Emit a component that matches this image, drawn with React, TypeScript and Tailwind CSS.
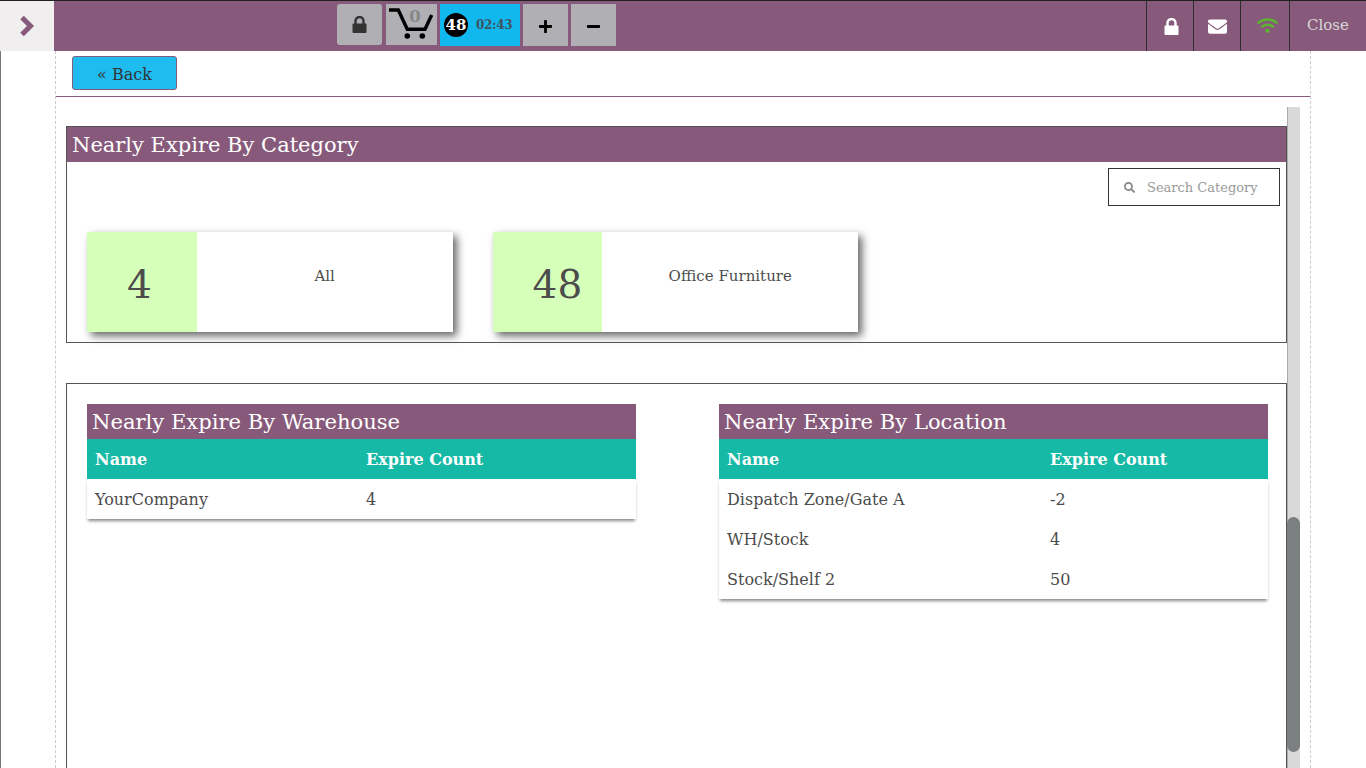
import { FaEnvelope, FaMinus, FaPlus, FaSearch, FaWifi } from "react-icons/fa";

const serif = "font-['DejaVu_Serif','Liberation_Serif',serif]";

function CategoryCard({ count, label }: { count: string; label: string }) {
  return (
    <div className="flex h-[100px] w-[365.6px] bg-white shadow-[4px_4px_8px_#666]">
      <div className="flex h-full w-[109.7px] items-center bg-[#d6ffb9] pl-[40px] pt-[6px] text-[39px] text-[#4c4c4c]">{count}</div>
      <div className="flex-1 pt-[33px] text-center text-[15px] text-[#4c4c4c]">{label}</div>
    </div>
  );
}

function ExpireTable({ title, rows, nameWidth, className }: { title: string; rows: [string, string][]; nameWidth: string; className: string }) {
  return (
    <div className={`w-[549px] ${className}`}>
      <div className="flex h-[35px] items-center bg-[#875a7b] pl-[5px] text-[21.1px] text-white">{title}</div>
      <div className="flex h-[40px] items-center bg-[#16b9a5] pl-[8px] pt-[1px] text-[16px] font-bold text-white">
        <div className={nameWidth}>Name</div>
        <div>Expire Count</div>
      </div>
      <div className="shadow-[0_3px_3px_-1px_#888]">
        {rows.map(([name, count]) => (
          <div key={name} className="flex h-[40px] items-center bg-white pl-[8px] pt-[1px] text-[16px] text-[#4c4c4c]">
            <div className={nameWidth}>{name}</div>
            <div>{count}</div>
          </div>
        ))}
      </div>
    </div>
  );
}

function LockIcon({ color }: { color: string }) {
  return (
    <svg width="15" height="17" viewBox="0 0 15 17" fill="none">
      <rect x="0.5" y="7.5" width="14" height="9.5" rx="1" fill={color} />
      <path d="M3.5 8V5a4 4 0 0 1 8 0v3" stroke={color} strokeWidth="2.4" />
    </svg>
  );
}

function CartIcon() {
  return (
    <svg width="51" height="41" viewBox="0 0 51 41" fill="none">
      <path d="M3 6H12.3L21.3 25.3H39L45.7 11" stroke="#000" strokeWidth="3.4" strokeLinejoin="miter" />
      <circle cx="21.3" cy="32" r="2.8" fill="#000" />
      <circle cx="36.3" cy="32" r="2.8" fill="#000" />
    </svg>
  );
}

export default function App() {
  return (
    <div className={`flex h-screen w-full flex-col overflow-hidden bg-white ${serif}`}>
      <header className="flex h-[51px] shrink-0 border-t border-t-[#222] bg-[#875a7b]">
        <div className="flex w-[54px] items-center justify-center bg-[#f0eeee]">
          <svg width="16" height="22" viewBox="0 0 16 22" fill="none">
            <path d="M3 2.5L11.5 11L3 19.5" stroke="#875a7b" strokeWidth="5" />
          </svg>
        </div>
        <div className="ml-[283px] flex items-start gap-[3px] pt-[3px]">
          <div className="mr-[1px] flex h-[41px] w-[45px] items-center justify-center rounded-[3px] bg-[#b0b0b4]">
            <LockIcon color="#333" />
          </div>
          <div className="relative h-[41px] w-[51px] bg-[#b0b0b4]">
            <CartIcon />
            <span className="absolute left-[23px] top-[0px] text-[17px] font-bold text-[#888]">0</span>
          </div>
          <div className="flex h-[42px] w-[80px] items-center bg-[#10b8ef] pl-[4px]">
            <span className="flex h-[24px] w-[24px] items-center justify-center rounded-full bg-black text-[15px] font-bold text-white">48</span>
            <span className="ml-[8px] text-[12px] font-bold tracking-[-0.3px] text-[#3f5560]">02:43</span>
          </div>
          <div className="flex h-[42px] w-[45px] items-center justify-center bg-[#b0b0b4] pt-[2px] text-[15px] text-black">
            <FaPlus />
          </div>
          <div className="flex h-[42px] w-[45px] items-center justify-center bg-[#b0b0b4] pt-[2px] text-[15px] text-black">
            <FaMinus />
          </div>
        </div>
        <div className="ml-auto flex">
          <div className="flex w-[47px] items-center justify-center border-l border-l-[#2c2c2c] pl-[2px]">
            <LockIcon color="#fff" />
          </div>
          <div className="flex w-[47px] items-center justify-center border-l border-l-[#2c2c2c] text-[19px] text-white">
            <FaEnvelope />
          </div>
          <div className="flex w-[49px] items-start justify-center border-l border-l-[#2c2c2c] pl-[5px] pt-[14px] text-[21px] text-[#5cb531]">
            <FaWifi />
          </div>
          <div className="flex w-[77px] items-center border-l border-l-[#2c2c2c] pb-[2px] pl-[17px] text-[15px] text-[#d8d8d8]">Close</div>
        </div>
      </header>

      <div className="min-h-0 flex-1 border-l border-l-[#777]">
        <main className="ml-[54px] flex h-full w-[1256px] flex-col border-x border-dashed border-x-[#ccc]">
          <div className="h-[46px] shrink-0 border-b border-b-[#875a7b] pl-[16px] pt-[5px]">
            <button className="h-[34px] w-[105px] rounded-[3px] border border-[#875a7b] bg-[#1fbcf0] pt-[3px] text-[16px] text-[#333]">« Back</button>
          </div>
          <div className="mt-[10px] flex min-h-0 flex-1">
            <div className="ml-[10px] w-[1221px] shrink-0 pt-[19px]">
              <section className="h-[217px] border border-[#555]">
                <h2 className="flex h-[35px] items-center bg-[#875a7b] pl-[5px] pt-[2px] text-[21px] font-normal text-white">Nearly Expire By Category</h2>
                <div className="flex justify-end pr-[6px] pt-[6px]">
                  <div className="flex h-[38px] w-[172px] items-center border border-[#333] pl-[15px] text-[13px] text-[#999]">
                    <FaSearch className="text-[11px] text-[#888]" />
                    <span className="ml-[12px] pt-[1px]">Search Category</span>
                  </div>
                </div>
                <div className="flex gap-[40px] pl-[20px] pt-[26px]">
                  <CategoryCard count="4" label="All" />
                  <CategoryCard count="48" label="Office Furniture" />
                </div>
              </section>
              <section className="mt-[40px] flex h-[500px] border border-[#555] pl-[20px] pt-[20px]">
                <ExpireTable title="Nearly Expire By Warehouse" nameWidth="w-[271px]" className="" rows={[["YourCompany", "4"]]} />
                <ExpireTable
                  title="Nearly Expire By Location"
                  nameWidth="w-[323px]"
                  className="ml-[83px]"
                  rows={[
                    ["Dispatch Zone/Gate A", "-2"],
                    ["WH/Stock", "4"],
                    ["Stock/Shelf 2", "50"],
                  ]}
                />
              </section>
            </div>
            <div className="relative w-[13px] shrink-0 border-l border-l-[#aaa] bg-[#d9d9d9]">
              <div className="absolute -left-px top-[410px] h-[235px] w-[13px] rounded-full bg-[#7c7f7f]" />
            </div>
          </div>
        </main>
      </div>
    </div>
  );
}
